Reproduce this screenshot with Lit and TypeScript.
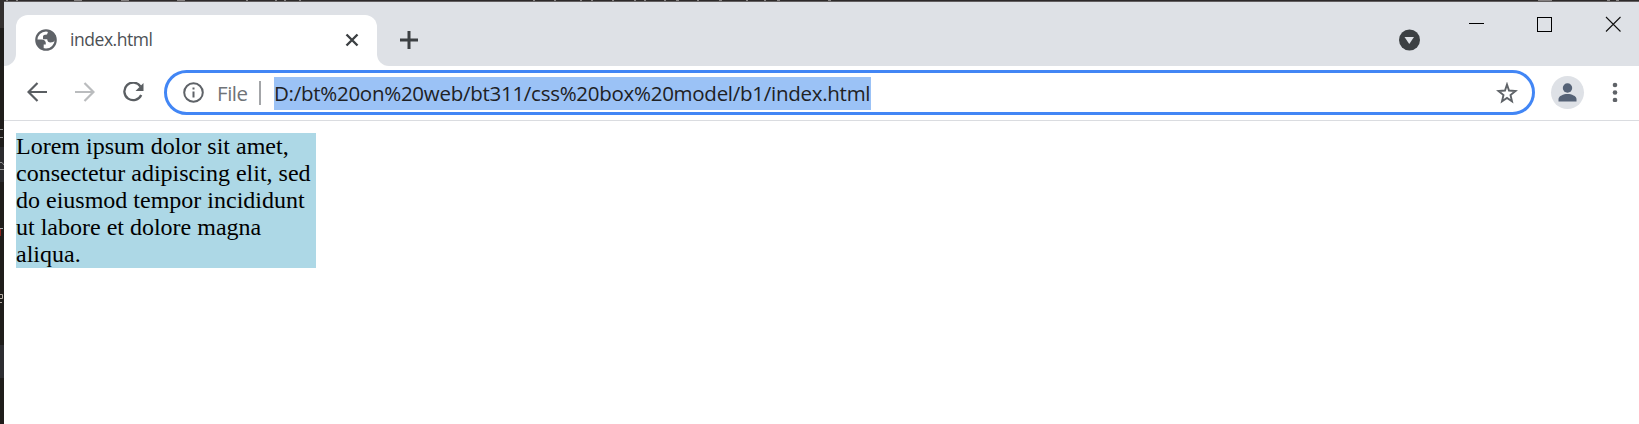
import { LitElement, html, css, svg } from "lit";
import { customElement } from "lit/decorators.js";

const icon = (w: number, h: number, body: unknown) =>
  html`<svg width=${w} height=${h} viewBox="0 0 ${w} ${h}" fill="none">${body}</svg>`;

@customElement("tab-strip")
class TabStrip extends LitElement {
  static styles = css`
    :host { display: flex; flex-direction: column; height: 64px; }
    svg { display: block; flex: none; }
    .top { height: 13px; background: #dee1e6; }
    .row { display: flex; height: 51px; }
    .lead { width: 12px; background: #dee1e6; border-bottom-right-radius: 12px; }
    .tabwrap { width: 361px; height: 51px; flex: none; background: linear-gradient(#dee1e6 50%, #fff 50%); }
    .tab { display: flex; height: 51px; box-sizing: border-box; padding: 14px 18px 0 19px; background: #fff; border-radius: 12px 12px 0 0; }
    .title { flex: 1; margin: -2px 0 0 13px; font-size: 17.500px; line-height: 24px; letter-spacing: -0.450px; color: #4c5054; }
    .close { margin-top: 4px; }
    .rest { flex: 1; display: flex; background: #dee1e6; border-bottom-left-radius: 12px; padding-right: 18px; }
    .plus { margin: 16px 0 0 23px; }
    .drop { margin: 14px 0 0 auto; }
    .win { margin-left: 48px; display: flex; gap: 52px; }
  `;
  render() {
    return html`
      <div class="top"></div>
      <div class="row">
        <div class="lead"></div>
        <div class="tabwrap"><div class="tab">
          ${icon(22, 22, svg`<circle cx="11" cy="11" r="9.700" fill="#fff" stroke="#5f6368" stroke-width="2.200"/><path d="M13.500 1.500 12 5.500Q8 5.700 8 7.500V10.300H12.200Q12.500 13.500 15.500 13.500 18.500 13.500 20.200 11.300L21 7 17 2.800ZM1.500 10.500H7Q11.300 10.800 10.800 15.500H8.700V20L5 18.500 2 15Z" fill="#5f6368"/>`)}
          <span class="title">index.html</span>
          <span class="close">${icon(14, 14, svg`<path d="M1.500 1.500 12.500 12.500M12.500 1.500 1.500 12.500" stroke="#3c4043" stroke-width="2.400"/>`)}</span>
        </div></div>
        <div class="rest">
          <div class="plus">${icon(18, 18, svg`<path d="M9 0V18M0 9H18" stroke="#3c4043" stroke-width="3"/>`)}</div>
          <div class="drop">${icon(22, 22, svg`<circle cx="10.500" cy="11" r="10.500" fill="#3c4043"/><path d="M5.500 8H15L10.250 15Z" fill="#dee1e6"/>`)}</div>
          <div class="win">
            ${icon(16, 18, svg`<path d="M0 8.500H15" stroke="#000"/>`)}
            ${icon(16, 18, svg`<rect x=".5" y="2.500" width="14" height="14" stroke="#000"/>`)}
            ${icon(16, 18, svg`<path d="M1 2 15.500 16.500M15.500 2 1 16.500" stroke="#111" stroke-width="1.100"/>`)}
          </div>
        </div>
      </div>`;
  }
}

@customElement("nav-toolbar")
class NavToolbar extends LitElement {
  static styles = css`
    :host { display: flex; align-items: flex-start; height: 55px; box-sizing: border-box; border-bottom: 1px solid #dadce0; padding: 4px 20px 0 23px; background: #fff; }
    svg { display: block; flex: none; }
    .nav { display: flex; gap: 28px; padding-top: 12px; width: 137px; flex: none; }
    .omni { flex: none; box-sizing: border-box; display: flex; align-items: center; width: 1371px; height: 45px; border: 3px solid #4286f5; border-radius: 23px; padding: 0 14px 0 16px; }
    .file { margin-left: 13px; font-size: 20.500px; line-height: 28px; letter-spacing: -0.450px; color: #707478; width: 32px; white-space: nowrap; }
    .bar { width: 2px; height: 24px; margin-left: 10px; background: #a3a5a8; }
    .url { margin: 1px 0 0 13px; height: 33px; line-height: 33px; width: 597px; box-sizing: border-box; background: #9bc2f6; color: #202124; font-size: 20.500px; letter-spacing: -0.270px; white-space: nowrap; }
    .star { margin-left: auto; }
    .avatar { margin: 6px 0 0 16px; width: 33px; height: 33px; border-radius: 50%; background: #dee1e6; }
    .menu { margin: 12px 0 0 28px; }
  `;
  render() {
    return html`
      <div class="nav">
        ${icon(20, 20, svg`<path d="M20 10H2M10.500 1 1.500 10l9 9" stroke="#5a5e62" stroke-width="2.200"/>`)}
        ${icon(20, 20, svg`<path d="M0 10H18M9.500 1l9 9-9 9" stroke="#babcbe" stroke-width="2.200"/>`)}
        ${icon(22, 22, svg`<path d="M17.500 4.500A8.800 8.800 0 1 0 18.200 13" stroke="#5a5e62" stroke-width="2.300"/><path d="M20.500 1V9H12.500Z" fill="#5a5e62"/>`)}
      </div>
      <div class="omni">
        ${icon(21, 21, svg`<circle cx="10.500" cy="10.500" r="9.300" stroke="#5f6368" stroke-width="2"/><path d="M10.500 9.500V15.500M10.500 5.500V7.500" stroke="#5f6368" stroke-width="2"/>`)}
        <span class="file">File</span><span class="bar"></span>
        <span class="url">D:/bt%20on%20web/bt311/css%20box%20model/b1/index.html</span>
        <div class="star">${icon(22, 22, svg`<path d="M11 2.500 13 8.500 19.500 9 14.500 13 16 19.300 11 16 6 19.300 7.500 13 2.500 9 9 8.500Z" stroke="#5f6368" stroke-width="1.900"/>`)}</div>
      </div>
      <div class="avatar">${icon(33, 33, svg`<circle cx="16.500" cy="12" r="4.700" fill="#556276"/><path d="M7.500 25.500V23c0-3 5-5 9-5s9 2 9 5v2.500Z" fill="#556276"/>`)}</div>
      <div class="menu">${icon(6, 20, svg`<g fill="#5f6368"><circle cx="3" cy="3" r="2.300"/><circle cx="3" cy="10.500" r="2.300"/><circle cx="3" cy="18" r="2.300"/></g>`)}</div>`;
  }
}

@customElement("app-root")
class AppRoot extends LitElement {
  static styles = css`
    :host { display: flex; width: 1639px; height: 424px; overflow: hidden; background: #fff; font-family: "Open Sans", "Noto Sans", sans-serif; }
    .edge { width: 4px; flex: none; overflow: hidden; background: linear-gradient(#33302f 0 28px, #1f1d1b 28px 147px, #2b2b2e 147px 182px, #1f1d1b 182px 345px, #2d2d31 345px 378px, #1f1d1b 378px); }
    .edge svg, .shade svg { display: block; }
    .window { flex: 1; display: flex; flex-direction: column; }
    .shade { height: 1px; background: #2d2a2a; border-bottom: 1px solid #625f60; }
    .page { padding: 12px; }
    .box { width: 300px; background: lightblue; font: 24px/27px "Liberation Serif", serif; color: #000; }
  `;
  render() {
    return html`
      <div class="edge">${icon(4, 424, svg`<path d="M0 129.500H3M0 137.500H3M0 162.500H2L4 165M0 169.500H4" stroke="#929292"/><path d="M0 228.500H3" stroke="#aaa"/><path d="M.5 229V236" stroke="#8b2420"/><path d="M0 294.500H2.500V298.500H0M0 302.500H2" stroke="#b4aca4"/>`)}</div>
      <div class="window">
        <div class="shade">${icon(1635, 1, svg`<path d="M2 .5h2M12 .5h2M70 .5h8M117 .5h8M173 .5h8M242 .5h2M271 .5h2M280 .5h2M295 .5h2M529 .5h2M550 .5h2M576 .5h2M587 .5h2M608 .5h2M630 .5h2M640 .5h2M660 .5h2M672 .5h3M693 .5h2M715 .5h3M742 .5h2M760 .5h2M773 .5h3M824 .5h3M1534 .5h14M1603 .5h3M1612 .5h3" stroke="#858181"/>`)}</div>
        <tab-strip></tab-strip>
        <nav-toolbar></nav-toolbar>
        <div class="page"><div class="box">Lorem ipsum dolor sit amet, consectetur adipiscing elit, sed do eiusmod tempor incididunt ut labore et dolore magna aliqua.</div></div>
      </div>`;
  }
}
